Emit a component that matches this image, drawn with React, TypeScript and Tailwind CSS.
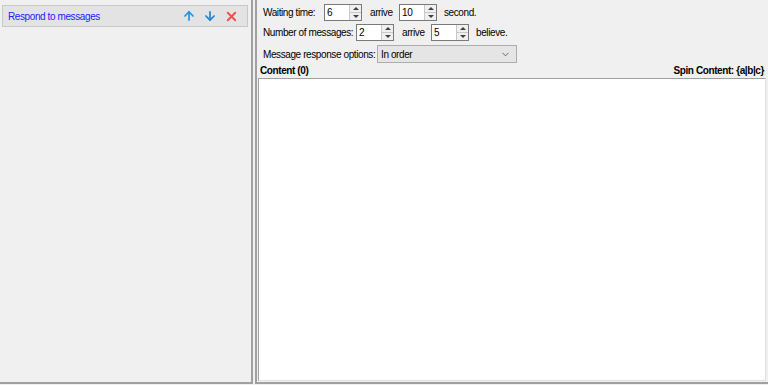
import { ArrowUp, ArrowDown, X, ChevronDown } from "lucide-react";

const font = { fontFamily: '"Liberation Sans", Arial, sans-serif' };

const Spin = ({ value }: { value: string }) => (
  <div className="flex h-[17px] w-[38px] shrink-0 border border-[#7a7a7a] bg-white">
    <div className="flex-1 pl-[2px] leading-[15px] text-black">{value}</div>
    <div className="flex w-[12px] flex-col border-l border-[#c8c8c8] bg-[#f0f0f0]">
      <div className="flex flex-1 items-center justify-center border-b border-[#c8c8c8]">
        <div className="h-0 w-0 border-x-[3px] border-b-[3px] border-x-transparent border-b-[#404040]" />
      </div>
      <div className="flex flex-1 items-center justify-center">
        <div className="h-0 w-0 border-x-[3px] border-t-[3px] border-x-transparent border-t-[#404040]" />
      </div>
    </div>
  </div>
);

export default function App() {
  return (
    <div className="flex h-[385px] w-[768px] bg-[#f0f0f0] text-[10px] tracking-[-0.4px] text-black" style={font}>
      {/* left panel */}
      <div className="flex h-[384px] w-[253px] flex-col border-r-2 border-b-2 border-[#a0a0a0] px-[2px] pt-[5px]">
        <div className="flex h-[22px] w-[246px] items-center border border-[#c8c8c8] bg-[#e3e3e3] pl-[5px] pr-[8px]">
          <span className="flex-1 whitespace-nowrap text-[#2020ff]">Respond to messages</span>
          <div className="flex items-center gap-[7px]">
            <ArrowUp size={14} strokeWidth={3} className="text-[#1e9ae6]" />
            <ArrowDown size={14} strokeWidth={3} className="text-[#1e88d8]" />
            <X size={15} strokeWidth={3} className="text-[#f05050]" />
          </div>
        </div>
      </div>

      {/* right panel */}
      <div className="ml-[2px] flex h-[384px] flex-1 flex-col border-l-2 border-b-2 border-[#a0a0a0] pl-[1px] pr-[2px]">
        <div className="flex flex-col gap-[3px] pl-[5px] pt-[4px]">
          <div className="flex h-[17px] items-center whitespace-nowrap">
            <span className="w-[61px] shrink-0">Waiting time:</span>
            <Spin value="6" />
            <span className="ml-[8px] w-[29px] shrink-0">arrive</span>
            <Spin value="10" />
            <span className="ml-[7px]">second.</span>
          </div>
          <div className="flex h-[17px] items-center whitespace-nowrap">
            <span className="w-[93px] shrink-0">Number of messages:</span>
            <Spin value="2" />
            <span className="ml-[8px] w-[29px] shrink-0">arrive</span>
            <Spin value="5" />
            <span className="ml-[7px]">believe.</span>
          </div>
          <div className="mt-[1px] flex h-[18px] items-center whitespace-nowrap">
            <span className="w-[114px] shrink-0">Message response options:</span>
            <div className="flex h-[18px] w-[140px] items-center border border-[#adadad] bg-[#e5e5e5] pl-[3px] pr-[5px]">
              <span className="flex-1">In order</span>
              <ChevronDown size={11} className="text-[#606060]" />
            </div>
          </div>
        </div>
        <div className="flex h-[15px] items-center justify-between whitespace-nowrap pl-[2px] pr-[2px] font-bold">
          <span>Content (0)</span>
          <span>Spin Content: {"{a|b|c}"}</span>
        </div>
        <div className="mb-[1px] flex-1 border border-[#a0a0a0] border-r-[#e0e0e0] border-b-[#e0e0e0] bg-white" />
      </div>
    </div>
  );
}
